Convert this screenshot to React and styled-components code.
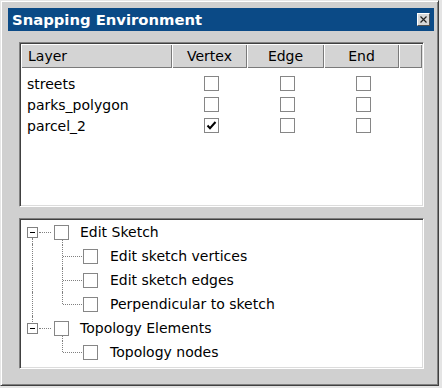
import React from 'react';
import styled, { createGlobalStyle } from 'styled-components';

const Global = createGlobalStyle`
  html, body { margin: 0; padding: 0; background: #e4e4e4; }
  body { font-family: "DejaVu Sans", Tahoma, sans-serif; }
`;

const Window = styled.div`
  box-sizing: border-box;
  width: 439px;
  height: 386px;
  background: #d0d0d0;
  border: 1px solid;
  border-color: #e6e6e6 #404040 #404040 #e6e6e6;
  box-shadow: inset 1px 1px #ffffff, inset -1px -1px #808080;
  padding: 7px 4px 0 7px;
  display: flex;
  flex-direction: column;
`;

const TitleBar = styled.div`
  height: 23px;
  flex: none;
  background: #0b4a86;
  display: flex;
  align-items: center;
  justify-content: space-between;
  padding: 0 4px 0 4px;
`;

const Title = styled.span`
  color: #fff;
  font-weight: bold;
  font-size: 14.8px;
`;

const CloseButton = styled.div`
  box-sizing: border-box;
  width: 13px;
  height: 13px;
  background: #d8d8d8;
  border: 1px solid;
  border-color: #fff #505050 #505050 #fff;
  display: flex;
  align-items: center;
  justify-content: center;
`;

const Body = styled.div`
  flex: 1;
  display: flex;
  flex-direction: column;
  gap: 11px;
  padding: 11px 10px 16px 11px;
`;

const Panel = styled.div`
  box-sizing: border-box;
  background: #fff;
  border: 1px solid;
  border-color: #808080 #ffffff #ffffff #808080;
  box-shadow: inset 1px 1px #404040, inset -1px -1px #dcdcdc;
  padding: 1px;
  height: ${(p) => (p.$h ? `${p.$h}px` : 'auto')};
  flex: ${(p) => (p.$h ? 'none' : '1')};
  overflow: hidden;
`;

const cols = '151px 75px 77px 75px 1fr';

const HeaderRow = styled.div`
  display: grid;
  grid-template-columns: ${cols};
  height: 24px;
`;

const HeaderCell = styled.div`
  background: #d4d4d4;
  box-shadow: inset 1px 1px #ffffff, inset -1px -1px #7a7a7a;
  font-size: 14px;
  color: #000;
  display: flex;
  align-items: center;
  justify-content: ${(p) => (p.$left ? 'flex-start' : 'center')};
  padding-left: ${(p) => (p.$left ? '7px' : '0')};
`;

const ListBody = styled.div`
  padding-top: 5px;
`;

const ListRow = styled.div`
  display: grid;
  grid-template-columns: ${cols};
  height: 21px;
  align-items: center;
`;

const LayerName = styled.div`
  font-size: 14px;
  color: #000;
  padding-left: 6px;
  white-space: nowrap;
`;

const CheckCell = styled.div`
  display: flex;
  justify-content: center;
  align-items: center;
  padding-left: 4px;
`;

const Box = styled.div`
  box-sizing: border-box;
  width: 15px;
  height: 15px;
  border: 1px solid #868686;
  background: #fff;
  display: flex;
  align-items: center;
  justify-content: center;
  flex: none;
`;

const Check = ({ checked }) => (
  <Box>
    {checked && (
      <svg width="13" height="13" viewBox="0 0 13 13">
        <path d="M2.5 6.5 L5 9.2 L10.5 3" fill="none" stroke="#000" strokeWidth="2" />
      </svg>
    )}
  </Box>
);

const TreeBody = styled.div`
  display: flex;
  flex-direction: column;
`;

const TreeRow = styled.div`
  display: flex;
  align-items: center;
  height: 24px;
`;

const Guide = styled.div`
  position: relative;
  width: 29px;
  align-self: stretch;
  flex: none;
  &::before {
    content: '';
    display: ${(p) => (p.$line ? 'block' : 'none')};
    position: absolute;
    left: 11px;
    top: 0;
    bottom: 0;
    border-left: 1px dotted #808080;
  }
`;

const ExpanderCell = styled.div`
  position: relative;
  width: 33px;
  align-self: stretch;
  flex: none;
  display: flex;
  align-items: center;
  padding-left: 6px;
  box-sizing: border-box;
  &::before {
    content: '';
    display: ${(p) => (p.$up ? 'block' : 'none')};
    position: absolute;
    left: 11px;
    top: 0;
    height: 6px;
    border-left: 1px dotted #808080;
  }
  &::after {
    content: '';
    display: ${(p) => (p.$down ? 'block' : 'none')};
    position: absolute;
    left: 11px;
    bottom: 0;
    height: 6px;
    border-left: 1px dotted #808080;
  }
`;

const ExpandBox = styled.div`
  box-sizing: border-box;
  width: 11px;
  height: 11px;
  border: 1px solid #808080;
  background: #fff;
  display: flex;
  align-items: center;
  justify-content: center;
  flex: none;
  &::before {
    content: '';
    width: 5px;
    height: 1px;
    background: #000;
  }
`;

const HLine = styled.div`
  flex: 1;
  height: 0;
  border-top: 1px dotted #808080;
  margin: 0 3px 0 1px;
`;

const Branch = styled.div`
  position: relative;
  width: 33px;
  align-self: stretch;
  flex: none;
  &::before {
    content: '';
    position: absolute;
    left: 12px;
    top: 0;
    height: ${(p) => (p.$last ? '12px' : '100%')};
    border-left: 1px dotted #808080;
  }
  &::after {
    content: '';
    position: absolute;
    left: 13px;
    right: 1px;
    top: 12px;
    border-top: 1px dotted #808080;
  }
`;

const CheckWrap = styled.div`
  position: relative;
  &::after {
    content: '';
    display: ${(p) => (p.$stem ? 'block' : 'none')};
    position: absolute;
    left: 8px;
    top: 100%;
    height: 5px;
    border-left: 1px dotted #808080;
  }
`;

const NodeLabel = styled.span`
  font-size: 14px;
  color: #000;
  margin-left: ${(p) => (p.$child ? '12px' : '11px')};
  white-space: nowrap;
`;

const layers = [
  { name: 'streets', v: false, e: false, n: false },
  { name: 'parks_polygon', v: false, e: false, n: false },
  { name: 'parcel_2', v: true, e: false, n: false },
];

const tree = [
  { label: 'Edit Sketch', children: ['Edit sketch vertices', 'Edit sketch edges', 'Perpendicular to sketch'] },
  { label: 'Topology Elements', children: ['Topology nodes'] },
];

export default function App() {
  return (
    <>
      <Global />
      <Window>
        <TitleBar>
          <Title>Snapping Environment</Title>
          <CloseButton>
            <svg width="7" height="7" viewBox="0 0 7 7">
              <path d="M0.5 0.5 L6.5 6.5 M6.5 0.5 L0.5 6.5" stroke="#222" strokeWidth="1.2" />
            </svg>
          </CloseButton>
        </TitleBar>
        <Body>
          <Panel $h={165}>
            <HeaderRow>
              <HeaderCell $left>Layer</HeaderCell>
              <HeaderCell>Vertex</HeaderCell>
              <HeaderCell>Edge</HeaderCell>
              <HeaderCell>End</HeaderCell>
              <HeaderCell />
            </HeaderRow>
            <ListBody>
              {layers.map((l) => (
                <ListRow key={l.name}>
                  <LayerName>{l.name}</LayerName>
                  <CheckCell><Check checked={l.v} /></CheckCell>
                  <CheckCell><Check checked={l.e} /></CheckCell>
                  <CheckCell><Check checked={l.n} /></CheckCell>
                  <div />
                </ListRow>
              ))}
            </ListBody>
          </Panel>
          <Panel>
            <TreeBody>
              {tree.map((node, i) => {
                const hasNext = i < tree.length - 1;
                return (
                  <React.Fragment key={node.label}>
                    <TreeRow>
                      <ExpanderCell $up={i > 0} $down={hasNext}>
                        <ExpandBox />
                        <HLine />
                      </ExpanderCell>
                      <CheckWrap $stem={node.children.length > 0}>
                        <Check />
                      </CheckWrap>
                      <NodeLabel>{node.label}</NodeLabel>
                    </TreeRow>
                    {node.children.map((c, j) => (
                      <TreeRow key={c}>
                        <Guide $line={hasNext} />
                        <Branch $last={j === node.children.length - 1} />
                        <Check />
                        <NodeLabel $child>{c}</NodeLabel>
                      </TreeRow>
                    ))}
                  </React.Fragment>
                );
              })}
            </TreeBody>
          </Panel>
        </Body>
      </Window>
    </>
  );
}
